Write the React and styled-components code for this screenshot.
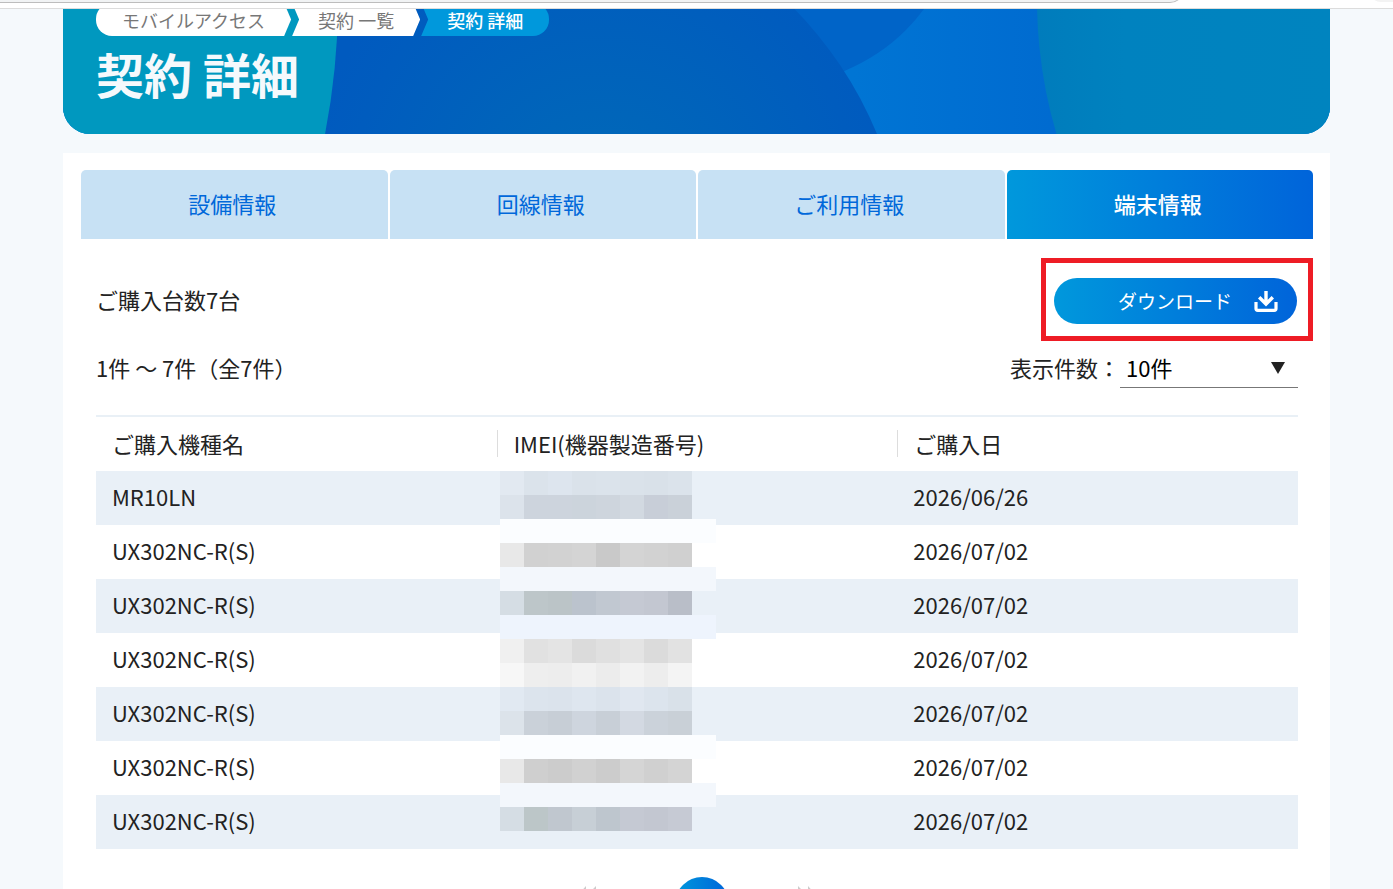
import React, { useState } from 'react'
import styled, { createGlobalStyle, css } from 'styled-components'

const GlobalStyle = createGlobalStyle`
  * {
    box-sizing: border-box;
  }

  body {
    margin: 0;
    background: #f5f9fc;
    color: #222;
    font-family: "Noto Sans CJK JP", "Noto Sans", sans-serif;
    font-size: 22px;
    line-height: 32px;
  }

  button, select {
    font: inherit;
  }
`

const tabs = ['設備情報', '回線情報', 'ご利用情報', '端末情報']

const devices = [
  { name: 'MR10LN', date: '2026/06/26' },
  { name: 'UX302NC-R(S)', date: '2026/07/02' },
  { name: 'UX302NC-R(S)', date: '2026/07/02' },
  { name: 'UX302NC-R(S)', date: '2026/07/02' },
  { name: 'UX302NC-R(S)', date: '2026/07/02' },
  { name: 'UX302NC-R(S)', date: '2026/07/02' },
  { name: 'UX302NC-R(S)', date: '2026/07/02' },
]

// one entry per 24px line, a single colour is a full band
const maskRows = [
  ['#e2e9f1', '#dbe3eb', '#dde5ee', '#dae2ea', '#dbe3eb', '#dae2ea', '#d9e1e9', '#dbe3eb'],
  ['#dce3eb', '#cdd4dd', '#cdd4dd', '#ccd4dc', '#ced5dd', '#d2d9e1', '#c8ced8', '#cad1d9'],
  ['#fbfdff'],
  ['#e8e8e8', '#d1d1d1', '#d2d2d2', '#d4d4d4', '#c9c9c9', '#d4d4d4', '#d2d2d2', '#d0d0d0'],
  ['#f3f7fc'],
  ['#d5dde4', '#bdc6c9', '#bbc4c7', '#bbc3cd', '#c1c8d1', '#c5c9d3', '#c3c7d1', '#b9bec8'],
  ['#eef4fd'],
  ['#f0f0f0', '#e1e1e1', '#e4e4e4', '#dbdbdb', '#e0e0e0', '#e4e4e4', '#dbdbdb', '#e2e2e2'],
  ['#f7f7f7', '#eeeeee', '#ededed', '#f1f1f1', '#ececec', '#f2f2f2', '#ededed', '#f4f4f4'],
  ['#e1e9f2', '#dce4ed', '#dbe3ec', '#dee6ef', '#dbe3ec', '#e0e7f0', '#dce4ed', '#d9e1e9'],
  ['#dce3ea', '#cad1d9', '#c7ced6', '#ced5de', '#c8cfd7', '#d3d9e2', '#cbd2da', '#c9d0d7'],
  ['#fbfdff'],
  ['#e8e8e8', '#cfcfcf', '#cccccc', '#d1d1d1', '#cccccc', '#d5d5d5', '#d0d0d0', '#d4d4d4'],
  ['#f3f7fc'],
  ['#d5dde4', '#bcc6c8', '#c0c7cf', '#c7cfd6', '#bec6ce', '#c5c9d3', '#c3c7d1', '#c6cad4'],
]

function BannerArt() {
  return (
    <Art viewBox="0 0 1267 125" preserveAspectRatio="xMidYMid slice" aria-hidden="true">
      <defs>
        <linearGradient id="sky" gradientUnits="userSpaceOnUse" x1="790" y1="0" x2="990" y2="0">
          <stop offset="0" stopColor="#0075d4" />
          <stop offset="1" stopColor="#006bd0" />
        </linearGradient>
        <radialGradient id="deep" gradientUnits="userSpaceOnUse" cx="540" cy="200" r="300">
          <stop offset="0.2" stopColor="#0067b9" />
          <stop offset="0.85" stopColor="#005cbe" />
          <stop offset="1" stopColor="#005abf" />
        </radialGradient>
        <linearGradient id="sea" gradientUnits="userSpaceOnUse" x1="974" y1="0" x2="1267" y2="0">
          <stop offset="0" stopColor="#007cbc" />
          <stop offset="0.3" stopColor="#0082bf" />
          <stop offset="1" stopColor="#0084bf" />
        </linearGradient>
      </defs>
      <rect width="1267" height="125" fill="url(#sky)" />
      <circle cx="710" cy="-112" r="188" fill="#0064c8" />
      <circle cx="449" cy="276" r="395" fill="url(#deep)" />
      <circle cx="1444" cy="-9" r="470" fill="url(#sea)" />
      <circle cx="-425" cy="-9" r="700" fill="#0098bf" />
    </Art>
  )
}

function App() {
  const [active, setActive] = useState('端末情報')
  const [perPage, setPerPage] = useState('10')

  return (
    <Page>
      <GlobalStyle />
      <BrowserEdge>
        <AddressBar />
        <EdgeButton />
      </BrowserEdge>
      <Banner>
        <BannerArt />
        <BannerContent>
          <Breadcrumb aria-label="breadcrumb">
            <Crumb href="#mobile" $place="first">モバイルアクセス</Crumb>
            <Crumb href="#contracts" $place="middle">契約 一覧</Crumb>
            <Crumb href="#detail" $place="last" aria-current="page">契約 詳細</Crumb>
          </Breadcrumb>
          <Title>契約 詳細</Title>
        </BannerContent>
      </Banner>
      <Card>
        <Tabs role="tablist">
          {tabs.map((tab) => (
            <Tab
              key={tab}
              role="tab"
              aria-selected={active === tab}
              $active={active === tab}
              onClick={() => setActive(tab)}
            >
              {tab}
            </Tab>
          ))}
        </Tabs>
        <Panel>
          <Row>
            <RowText>ご購入台数7台</RowText>
            <DownloadWrap>
              <DownloadButton>
                ダウンロード
                <svg width="24" height="22" viewBox="0 0 24 22" fill="none" stroke="#fff" strokeWidth="3.4" aria-hidden="true">
                  <path d="M12 1V14M5.200 7.200L12 14L18.800 7.200" />
                  <path d="M2 12V18.500Q2 20.300 3.800 20.300H20.200Q22 20.300 22 18.500V12" strokeWidth="3.200" />
                </svg>
              </DownloadButton>
              <Highlight />
            </DownloadWrap>
          </Row>
          <Row $second>
            <RowText>1件 ～ 7件（全7件）</RowText>
            <PerPage>
              <RowText as="label" htmlFor="perPage">表示件数：</RowText>
              <SelectBox>
                <select id="perPage" value={perPage} onChange={(e) => setPerPage(e.target.value)}>
                  <option value="10">10件</option>
                  <option value="20">20件</option>
                  <option value="50">50件</option>
                </select>
                <svg width="14" height="12" viewBox="0 0 14 12" aria-hidden="true">
                  <path d="M0 0H14L7 12Z" fill="#222" />
                </svg>
              </SelectBox>
            </PerPage>
          </Row>
          <Table>
            <thead>
              <tr>
                <th><span>ご購入機種名</span></th>
                <th><span>IMEI(機器製造番号)</span></th>
                <th><span>ご購入日</span></th>
              </tr>
            </thead>
            <tbody>
              {devices.map((device, i) => (
                <tr key={i}>
                  <td>{device.name}</td>
                  <td>
                    {i === 0 && (
                      <Mask aria-hidden="true">
                        {maskRows.map((row, r) => (
                          <MaskRow key={r}>
                            {row.map((color, c) => (
                              <MaskCell key={c} $band={row.length === 1} style={{ background: color }} />
                            ))}
                          </MaskRow>
                        ))}
                      </Mask>
                    )}
                  </td>
                  <td>{device.date}</td>
                </tr>
              ))}
            </tbody>
          </Table>
          <Pager aria-label="pagination">
            <PagerArrow aria-label="前へ">
              <svg width="16" height="20" viewBox="0 0 16 20" aria-hidden="true">
                <path d="M5 0V5L2 10L5 15V20L-4 10ZM15 0V5L11 10L15 15V20L5 10Z" fill="#ccc" />
              </svg>
            </PagerArrow>
            <PagerCurrent aria-label="1" aria-current="page" />
            <PagerArrow aria-label="次へ">
              <svg width="16" height="20" viewBox="0 0 16 20" aria-hidden="true">
                <path d="M1 0V5L5 10L1 15V20L11 10ZM11 0V5L14 10L11 15V20L20 10Z" fill="#ccc" />
              </svg>
            </PagerArrow>
          </Pager>
        </Panel>
      </Card>
    </Page>
  )
}

const Page = styled.div`
  height: 100vh;
  overflow: hidden;
`

const BrowserEdge = styled.div`
  display: flex;
  align-items: flex-start;
  justify-content: space-between;
  height: 9px;
  overflow: hidden;
  background: #fff;
  border-bottom: 1px solid #dcdcdc;
`

const AddressBar = styled.div`
  width: 85%;
  height: 24px;
  margin-top: -21px;
  background: #f1f3f4;
  border: solid #bdbdbd;
  border-width: 0 1px 1px 0;
  border-radius: 0 0 14px 0;
`

const EdgeButton = styled.div`
  width: 24px;
  height: 24px;
  margin-top: -22px;
  background: #f3f3f3;
  border-radius: 0 0 0 12px;
`

const Banner = styled.header`
  position: relative;
  margin: 0 63px;
  overflow: hidden;
  border-radius: 0 0 27px 27px;
  background: #0098bf;
`

const Art = styled.svg`
  position: absolute;
  inset: 0;
  width: 100%;
  height: 100%;
`

const BannerContent = styled.div`
  position: relative;
  padding: 0 33px 25px;
`

const Breadcrumb = styled.nav`
  display: flex;
  gap: 1px;
  margin-top: -6px;
`

const crumbShapes = {
  first: css`
    border-radius: 16px 0 0 16px;
    clip-path: polygon(0 0, calc(100% - 7px) 0, 100% 50%, calc(100% - 7px) 100%, 0 100%);
  `,
  middle: css`
    clip-path: polygon(0 0, calc(100% - 7px) 0, 100% 50%, calc(100% - 7px) 100%, 0 100%, 7px 50%);
  `,
  last: css`
    background: #0098dc;
    color: #fff;
    font-weight: 500;
    border-radius: 0 16px 16px 0;
    clip-path: polygon(0 0, 100% 0, 100% 100%, 0 100%, 7px 50%);
  `,
}

const Crumb = styled.a`
  height: 33px;
  padding: 0 26px;
  background: #fff;
  color: #777;
  font-size: 18px;
  line-height: 34px;
  text-decoration: none;
  ${({ $place }) => crumbShapes[$place]}
`

const Title = styled.h1`
  margin: 1px 0 0;
  color: #f5f9fc;
  font-size: 48px;
  font-weight: 700;
  line-height: 72px;
`

const Card = styled.main`
  margin: 19px 63px 0;
  padding: 17px 17px 40px 18px;
  background: #fff;
`

const Tabs = styled.div`
  display: grid;
  grid-template-columns: repeat(4, 1fr);
  gap: 2px;
`

const Tab = styled.button`
  height: 69px;
  padding: 0 4px 4px 0;
  border: 0;
  border-radius: 5px 5px 0 0;
  background: ${({ $active }) => ($active ? 'linear-gradient(90deg, #0098dc, #0064da)' : '#c7e1f4')};
  color: ${({ $active }) => ($active ? '#fff' : '#0068da')};
  font-weight: ${({ $active }) => ($active ? 500 : 400)};
  cursor: pointer;
`

const Panel = styled.div`
  padding: 39px 15px 0;
`

const Row = styled.div`
  display: flex;
  align-items: center;
  justify-content: space-between;
  margin-top: ${({ $second }) => ($second ? '25px' : '0')};
`

const RowText = styled.span`
  padding-bottom: 4px;
`

const DownloadWrap = styled.div`
  position: relative;
  margin-right: 1px;
`

const DownloadButton = styled.button`
  display: flex;
  align-items: center;
  justify-content: flex-end;
  gap: 22px;
  width: 243px;
  height: 46px;
  padding: 0 19px;
  border: 0;
  border-radius: 23px;
  background: linear-gradient(90deg, #0098dc, #0064da);
  color: #fff;
  font-size: 19px;
  font-weight: 400;
  cursor: pointer;
`

const Highlight = styled.div`
  position: absolute;
  inset: -20px -16px -17px -13px;
  border: 5px solid #ee1c25;
  pointer-events: none;
`

const PerPage = styled.div`
  display: flex;
  align-items: center;
`

const SelectBox = styled.div`
  display: grid;
  align-items: center;
  width: 178px;
  border-bottom: 1px solid #777;

  select, svg {
    grid-area: 1 / 1;
  }

  select {
    height: 38px;
    padding: 0 32px 2px 6px;
    border: 0;
    background: transparent;
    color: #000;
    appearance: none;
  }

  svg {
    justify-self: end;
    margin-right: 13px;
    pointer-events: none;
  }
`

const Table = styled.table`
  width: 100%;
  margin-top: 27px;
  border-collapse: collapse;
  border-top: 2px solid #e9f0f6;
  table-layout: fixed;

  th, td {
    height: 54px;
    padding: 0 16px 4px;
    text-align: left;
    font-weight: 400;
  }

  th {
    height: 55px;
    padding-bottom: 2px;

    span {
      display: block;
      line-height: 27px;
    }
  }

  th + th {
    padding-left: 0;

    span {
      padding-left: 16px;
      border-left: 1px solid #ddd;
    }
  }

  tbody tr:nth-child(odd) {
    background: #e9f0f7;
  }

  td:nth-child(2) {
    position: relative;
  }
`

// covers the IMEI values of every row
const Mask = styled.div`
  position: absolute;
  top: 0;
  left: 3px;
  z-index: 1;
`

const MaskRow = styled.div`
  display: flex;
`

const MaskCell = styled.div`
  width: ${({ $band }) => ($band ? '216px' : '24px')};
  height: 24px;
`

const Pager = styled.nav`
  display: flex;
  align-items: flex-start;
  justify-content: center;
  gap: 68px;
  margin-top: 28px;
`

const PagerArrow = styled.button`
  display: flex;
  margin-top: 9px;
  padding: 0;
  border: 0;
  background: none;
`

const PagerCurrent = styled.button`
  width: 54px;
  height: 54px;
  margin-left: 10px;
  border: 0;
  border-radius: 50%;
  background: linear-gradient(90deg, #0098dc, #0064da);
`

export default App
